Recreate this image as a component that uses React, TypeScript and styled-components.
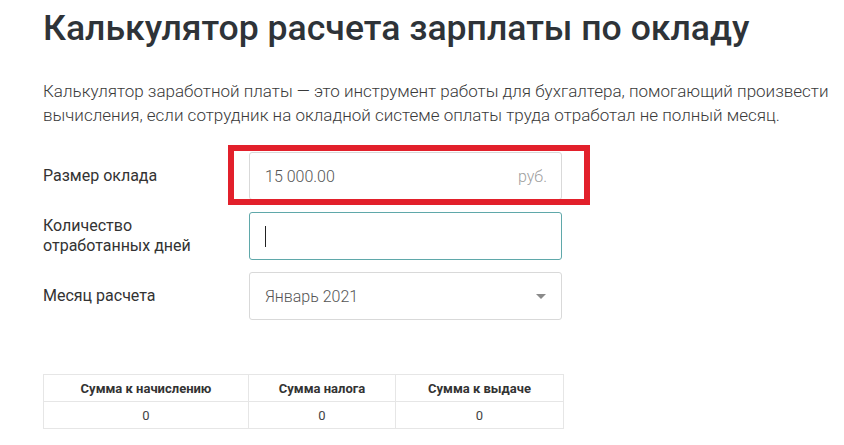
import React from "react";
import styled, { createGlobalStyle } from "styled-components";

const Global = createGlobalStyle`
  html, body { margin: 0; padding: 0; background: #fff; }
  body { font-family: Roboto, "Noto Sans", sans-serif; }
`;

const Page = styled.div`
  padding: 6px 0 0 43px;
  width: 801px;
`;

const Title = styled.h1`
  margin: 0;
  font-size: 35.6px;
  line-height: 44px;
  font-weight: 500;
  color: #2e3338;
  letter-spacing: 0;
`;

const Intro = styled.p`
  margin: 29px 0 0;
  font-size: 17px;
  line-height: 24px;
  font-weight: 300;
  color: #3a3a3a;
`;

const Form = styled.div`
  margin-top: 25px;
  display: flex;
  flex-direction: column;
  gap: 12px;
  width: 519px;
`;

const Row = styled.div`
  display: grid;
  grid-template-columns: 206px 313px;
  align-items: center;
`;

const Label = styled.label`
  font-size: 16px;
  line-height: 20px;
  color: #333;
`;

const Field = styled.div<{ $focused?: boolean }>`
  position: relative;
  height: 48px;
  box-sizing: border-box;
  border: 1px solid ${(p) => (p.$focused ? "#5fa8aa" : "#d9d9d9")};
  border-radius: 3px;
  display: flex;
  align-items: center;
  padding: 0 14px 0 15px;
  font-size: 16px;
  font-weight: 300;
  color: #555;
`;

const Value = styled.span<{ $tone?: string }>`
  flex: 1;
  color: ${(p) => p.$tone || "#555"};
`;

const Unit = styled.span`
  color: #a0a0a0;
`;

const Caret = styled.span`
  width: 1px;
  height: 21px;
  background: #222;
`;

const Arrow = styled.span`
  width: 0;
  height: 0;
  border-left: 5px solid transparent;
  border-right: 5px solid transparent;
  border-top: 5px solid #8a8a8a;
  margin-right: 1px;
`;

const Highlight = styled.div`
  position: absolute;
  left: -22px;
  top: -8px;
  right: -29px;
  bottom: -6px;
  border: 6px solid #e2202b;
  pointer-events: none;
`;

const Table = styled.table`
  margin-top: 54px;
  width: 520px;
  border-collapse: collapse;
  table-layout: fixed;
  font-size: 13px;
  color: #333;
`;

const Th = styled.th`
  border: 1px solid #e6e6e6;
  height: 26px;
  padding: 0;
  font-weight: 700;
  text-align: center;
`;

const Td = styled.td`
  border: 1px solid #e6e6e6;
  height: 26px;
  padding: 0;
  text-align: center;
  color: #444;
`;

export default function App() {
  return (
    <>
      <Global />
      <Page>
        <Title>Калькулятор расчета зарплаты по окладу</Title>
        <Intro>
          Калькулятор заработной платы — это инструмент работы для бухгалтера, помогающий произвести
          вычисления, если сотрудник на окладной системе оплаты труда отработал не полный месяц.
        </Intro>
        <Form>
          <Row>
            <Label>Размер оклада</Label>
            <Field>
              <Value>15 000.00</Value>
              <Unit>руб.</Unit>
              <Highlight />
            </Field>
          </Row>
          <Row>
            <Label>
              Количество
              <br />
              отработанных дней
            </Label>
            <Field $focused>
              <Caret />
            </Field>
          </Row>
          <Row>
            <Label>Месяц расчета</Label>
            <Field>
              <Value $tone="#555">Январь 2021</Value>
              <Arrow />
            </Field>
          </Row>
        </Form>
        <Table>
          <colgroup>
            <col style={{ width: 205 }} />
            <col style={{ width: 147 }} />
            <col style={{ width: 168 }} />
          </colgroup>
          <thead>
            <tr>
              <Th>Сумма к начислению</Th>
              <Th>Сумма налога</Th>
              <Th>Сумма к выдаче</Th>
            </tr>
          </thead>
          <tbody>
            <tr>
              <Td>0</Td>
              <Td>0</Td>
              <Td>0</Td>
            </tr>
          </tbody>
        </Table>
      </Page>
    </>
  );
}
